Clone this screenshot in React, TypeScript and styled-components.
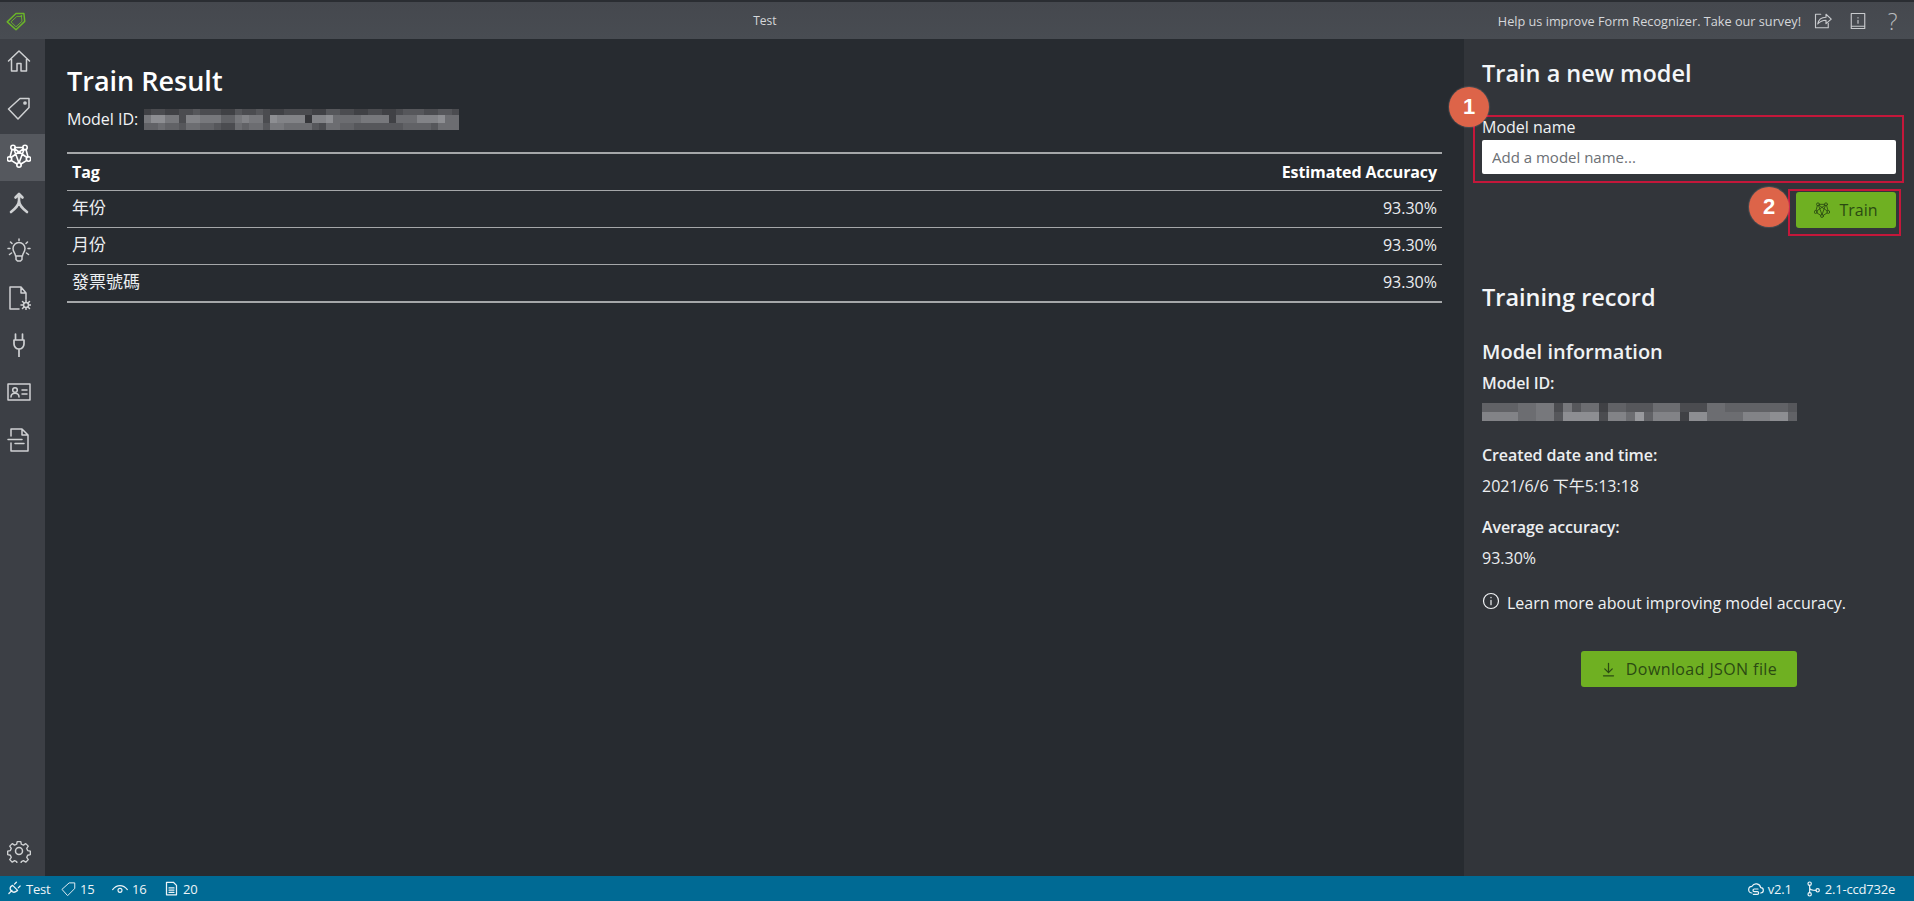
import React from "react";
import styled, { createGlobalStyle } from "styled-components";

const Global = createGlobalStyle`
  html, body { margin: 0; padding: 0; background: #272b30; }
  body { font-family: "Open Sans", "Noto Sans CJK TC", sans-serif; color: #f2f4f6; }
  * { box-sizing: border-box; }
`;

const Shell = styled.div`
  display: grid;
  grid-template-rows: 39px 1fr 25px;
  width: 1914px;
  height: 901px;
  overflow: hidden;
`;

const TitleBar = styled.header`
  display: flex;
  align-items: center;
  background: linear-gradient(#45484e, #484c52);
  border-top: 2px solid #2a2d32;
  font-size: 12.7px;
  color: #d5d7da;
`;
const Logo = styled.div`
  display: flex;
  width: 32px;
  padding-left: 6px;
`;
const BarTitle = styled.div`
  flex: 1;
  text-align: center;
  font-size: 12px;
`;
const BarRight = styled.div`
  display: flex;
  align-items: center;
  padding-right: 4px;
`;
const Survey = styled.span`
  margin-right: 4px;
`;
const BarIcon = styled.span`
  display: flex;
  width: 35px;
  justify-content: center;
  color: #c8cacd;
`;

const Body = styled.div`
  display: grid;
  grid-template-columns: 45px 1fr 450px;
  min-height: 0;
`;

const Side = styled.nav`
  display: flex;
  flex-direction: column;
  background: #3c3f45;
`;
const SideItem = styled.div<{ $active?: boolean }>`
  height: 47.3px;
  display: flex;
  align-items: center;
  justify-content: center;
  padding: 0 7px 3px 0;
  color: ${(p) => (p.$active ? "#ffffff" : "#cfd1d3")};
  background: ${(p) => (p.$active ? "#55585e" : "transparent")};
`;
const SideBottom = styled(SideItem)`
  margin-top: auto;
`;

const Main = styled.main`
  background: #272b30;
  padding: 22px 22px 0;
`;
const PageTitle = styled.h1`
  margin: 0;
  font-size: 27px;
  line-height: 40px;
  font-weight: 600;
  color: #ffffff;
`;
const IdRow = styled.div`
  display: flex;
  align-items: center;
  margin-top: 6px;
  height: 24px;
  font-size: 16px;
  gap: 6px;
`;
const Table = styled.table`
  width: 100%;
  margin-top: 21px;
  border-collapse: separate;
  border-spacing: 0;
  border-top: 2px solid #a5a7a9;
  border-bottom: 2px solid #a5a7a9;
`;
const HeadRow = styled.tr`
  height: 36px;
`;
const Row = styled.tr`
  height: 37px;
  & > * {
    border-top: 1px solid #a5a7a9;
  }
`;
const Cell = styled.td<{ $right?: boolean }>`
  padding: 0 5px 2px;
  font-size: ${(p) => (p.$right ? "16px" : "17px")};
  line-height: 24px;
  text-align: ${(p) => (p.$right ? "right" : "left")};
  color: #eceef0;
`;
const HeadCell = styled.th<{ $right?: boolean }>`
  padding: 0 5px;
  font-size: 16px;
  font-weight: 700;
  letter-spacing: -0.1px;
  text-align: ${(p) => (p.$right ? "right" : "left")};
  color: #ffffff;
`;

const Panel = styled.aside`
  background: #32353a;
  padding: 17px 18px 0;
`;
const PanelTitle = styled.h2<{ $gap?: number }>`
  margin: ${(p) => p.$gap ?? 0}px 0 0;
  font-size: 23.5px;
  line-height: 34px;
  font-weight: 600;
  color: #f4f6f8;
`;
const SubTitle = styled.h3`
  margin: 24px 0 0;
  font-size: 20px;
  line-height: 28px;
  font-weight: 600;
  color: #f0f2f4;
`;
const FieldBlock = styled.div`
  position: relative;
  margin-top: 25px;
`;
const FieldLabel = styled.label`
  display: block;
  font-size: 16px;
  line-height: 24px;
  color: #f0f2f4;
`;
const NameInput = styled.input`
  display: block;
  width: 414px;
  height: 34px;
  margin-top: 1px;
  padding: 0 10px;
  border: 0;
  border-radius: 2px;
  background: #ffffff;
  font: 15px "Open Sans", sans-serif;
  &::placeholder {
    color: #6c7075;
    opacity: 1;
  }
`;
const Frame = styled.div<{ $inset: string }>`
  position: absolute;
  inset: ${(p) => p.$inset};
  border: 2px solid #c4173a;
  pointer-events: none;
`;
const Badge = styled.div<{ $left: number; $top: number }>`
  position: absolute;
  left: ${(p) => p.$left}px;
  top: ${(p) => p.$top}px;
  width: 40px;
  height: 40px;
  border-radius: 50%;
  display: flex;
  align-items: center;
  justify-content: center;
  background: #dd6449;
  box-shadow: 0 0 1px 1px rgba(255, 255, 255, 0.12);
  font: 700 22px "Liberation Sans", sans-serif;
  color: #ffffff;
`;
const TrainRow = styled.div`
  position: relative;
  display: flex;
  justify-content: flex-end;
  margin-top: 18px;
  width: 414px;
`;
const GreenButton = styled.button<{ $w: number }>`
  display: flex;
  align-items: center;
  justify-content: center;
  gap: 9px;
  width: ${(p) => p.$w}px;
  height: 36px;
  padding: 0;
  border: 0;
  border-radius: 3px;
  background: #6fb022;
  color: #2b4a12;
  font: 16px "Open Sans", sans-serif;
`;
const DownloadButton = styled(GreenButton)`
  gap: 10px;
  letter-spacing: 0.4px;
`;
const InfoLabel = styled.div<{ $gap: number }>`
  margin-top: ${(p) => p.$gap}px;
  font-size: 16px;
  line-height: 24px;
  font-weight: 600;
  letter-spacing: -0.1px;
  color: #eceef0;
`;
const InfoValue = styled.div`
  margin-top: 7px;
  font-size: 16px;
  line-height: 24px;
  color: #eceef0;
`;
const MosaicRow = styled.div`
  display: flex;
  margin-top: 8px;
`;
const LearnRow = styled.div`
  display: flex;
  align-items: center;
  gap: 7px;
  margin-top: 21px;
  font-size: 16px;
  line-height: 24px;
  color: #f0f2f4;
`;
const LearnIcon = styled.span`
  display: flex;
  margin-top: -5px;
`;
const Center = styled.div`
  display: flex;
  justify-content: center;
  width: 414px;
  margin-top: 36px;
`;

const StatusBar = styled.footer`
  display: flex;
  align-items: center;
  justify-content: space-between;
  background: #006a94;
  color: #eef4f7;
  font-size: 13px;
  letter-spacing: -0.2px;
  padding: 0 19px 0 7px;
`;
const StatusGroup = styled.div`
  display: flex;
  align-items: center;
`;
const StatusItem = styled.span<{ $w?: number }>`
  display: flex;
  align-items: center;
  gap: 4px;
  width: ${(p) => (p.$w ? `${p.$w}px` : "auto")};
`;
const MosaicSvg = styled.svg`
  filter: blur(0.4px);
`;

type P = { size?: number };
const S: React.FC<React.PropsWithChildren<P & { w?: number; sw?: number; vb?: string }>> = ({ size = 24, w, sw = 1.5, vb = "0 0 24 24", children }) => (
  <svg width={w ?? size} height={size} viewBox={vb} fill="none" stroke="currentColor" strokeWidth={sw} strokeLinecap="round" strokeLinejoin="round">
    {children}
  </svg>
);

const HomeIcon = () => (
  <S>
    <path d="M1.5 12 12 2l10.5 10M4.5 10v12h5.5v-7.5h4V22h5.500V10" />
  </S>
);
const TagIcon = () => (
  <S>
    <path d="M1.500 13 13 2.500h9v9L11 23z" />
    <circle cx="18" cy="7" r="1.100" fill="currentColor" />
  </S>
);
const NetIcon: React.FC<P & { sw?: number }> = ({ size = 24, sw = 1.6 }) => (
  <S size={size} sw={sw}>
    <circle cx="6" cy="3.500" r="2.200" />
    <circle cx="18" cy="3.500" r="2.200" />
    <circle cx="21.500" cy="15" r="2.200" />
    <circle cx="12" cy="21" r="2.200" />
    <circle cx="2.500" cy="15" r="2.200" />
    <path d="M8 3.500h8M19 5.500l2 7.500M19.800 16.300 14 20M10 20l-5.800-3.700M3 13l2-7.500M7.700 5 20 13.500M16.300 5 4 13.500M7 5.500l5 13.500M17 5.500l-5 13.500" />
  </S>
);
const MergeIcon = () => (
  <S sw={2.600}>
    <path d="M12 3.500v6c0 5-3.500 8-8 11.500M12 9.500c0 5 3.500 8 8 11.500M8.500 6.500 12 3l3.500 3.500" />
  </S>
);
const BulbIcon = () => (
  <S>
    <path d="M8.500 18c0-3-2.500-4-2.500-7.500a6 6 0 0 1 12 0c0 3.500-2.500 4.500-2.500 7.500zM9 18v3.500l1.500 1.500h3l1.500-1.500V18M12 1v1.500M3.500 4 5 5.500M20.500 4 19 5.500M1 10.500h2M21 10.500h2M2.500 16.500 4.500 15M21.500 16.500 19.500 15" />
  </S>
);
const DocGearIcon = () => (
  <S>
    <path d="M12 23H3V1h11l5 6v6M14 1v6h5" />
    <circle cx="19" cy="19" r="2.500" />
    <path d="M19 14v2M19 22v2M14 19h2M22 19h2M15.500 15.500l1.500 1.500M21 21l1.500 1.500M22.500 15.500 21 17M17 21l-1.500 1.500" />
  </S>
);
const PlugIcon = () => (
  <S sw={1.700}>
    <path d="M8.500 1v6M15.500 1v6M7 7h10v4a5 5 0 0 1-10 0zM12 16v8" />
  </S>
);
const CardIcon = () => (
  <S>
    <rect x="1" y="4" width="22" height="16" />
    <circle cx="8" cy="10" r="2.300" />
    <path d="M4 17c0-5 8-5 8 0M15 10h5M15 14h5" />
  </S>
);
const FormIcon = () => (
  <S>
    <path d="M4 8V1h11l6 6v16H4v-8M15 1v6h6M1 11.500h14M8 15.500h9" />
  </S>
);
const GearIcon = () => (
  <S>
    <circle cx="12" cy="12" r="3.500" />
    <path d="M10 1.500h4l.6 3 2.300 1 2.600-1.700 2.800 2.800-1.700 2.600 1 2.300 3 .6v4l-3 .6-1 2.300 1.700 2.600-2.800 2.800-2.600-1.700-2.300 1-.6 3h-4l-.6-3-2.300-1-2.600 1.700-2.800-2.800 1.700-2.600-1-2.300-3-.6v-4l3-.6 1-2.300L1.700 6.600l2.800-2.800 2.600 1.700 2.300-1z" transform="translate(1.200 1.200) scale(.9)" />
  </S>
);
const LogoIcon = () => (
  <svg width="20" height="20" viewBox="0 0 24 24" fill="none" stroke="#6bb42a" strokeWidth="1.800" strokeLinejoin="round">
    <path d="M1.500 13 12 3h9.500l1 9.500L12 22.500z" />
    <path d="M6 13 13 6.500h5.500l.7 5.800L12 19z" strokeWidth="1.100" />
    <circle cx="18.500" cy="6" r="1.100" fill="#6bb42a" stroke="none" />
  </svg>
);
const ShareIcon = () => (
  <S size={18}>
    <path d="M9 3H2v18h17v-6M5 16c1-6 5-9 11-9V3l7 6.500-7 6V11c-5 0-8 1.500-11 5z" />
  </S>
);
const BookIcon = () => (
  <S size={18}>
    <path d="M3 19V2h18v17zM3 19v3h18v-3M12 7.500v.5M12 11v4" />
  </S>
);
const HelpGlyph = styled.span`
  width: 35px;
  text-align: center;
  font: 300 23px "Open Sans", sans-serif;
  line-height: 20px;
  color: #b9bbbe;
`;
const InfoCircle = () => (
  <S size={18} sw={1.600}>
    <circle cx="12" cy="12" r="10" />
    <path d="M12 7v.500M12 11v6" />
  </S>
);
const DownloadIcon = () => (
  <S size={15} sw={2}>
    <path d="M12 2v15M6 11l6 6 6-6M4 22h16" />
  </S>
);
const PlugStatus = () => (
  <S size={15} sw={2}>
    <path d="M3 21l5-5M15 3l-3 3M21 9l-3 3M9 8l8 8-3 2c-3 2-6 0-7-1s-3-4-1-7z" transform="translate(0 -1)" />
  </S>
);
const TagStatus = () => (
  <S size={15}>
    <path d="M2 13 13 3h9v9L11 23z" />
  </S>
);
const EyeStatus = () => (
  <S size={16} sw={1.700}>
    <path d="M1 13c6-8 16-8 22 0" />
    <circle cx="12" cy="14" r="3" />
  </S>
);
const DocStatus = () => (
  <S size={15} sw={2}>
    <path d="M4 2h11l5 5v15H4zM8 11h8M8 14.500h8M8 18h8" />
  </S>
);
const CloudStatus = () => (
  <S size={16} sw={1.800}>
    <path d="M6 18a5 5 0 0 1 0-10 7 7 0 0 1 13 2 4 4 0 0 1 0 8M15 12H9.500a2 2 0 0 0 0 4H14a2 2 0 0 1 0 4H8" />
  </S>
);
const BranchStatus = () => (
  <S size={16} sw={1.800}>
    <circle cx="7" cy="4" r="2.500" />
    <circle cx="7" cy="20" r="2.500" />
    <circle cx="19" cy="14" r="2.500" />
    <path d="M7 6.500v11M7 10c0 3 4 4 9.500 4" />
  </S>
);

const Mosaic: React.FC<{ rows: string[]; cell: number; heights: number[] }> = ({ rows, cell, heights }) => {
  let y = 0;
  const total = heights.reduce((a, b) => a + b, 0);
  return (
    <MosaicSvg width={rows[0].length * cell} height={total} shapeRendering="crispEdges">
      {rows.map((r, ri) => {
        const top = y;
        y += heights[ri];
        return r.split("").map((c, i) => {
          const v = 42 + parseInt(c, 16) * 11;
          return <rect key={`${ri}-${i}`} x={i * cell} y={top} width={cell} height={heights[ri]} fill={`rgb(${v},${v + 1},${v + 5})`} />;
        });
      })}
    </MosaicSvg>
  );
};

const rowsA = [
  "233223343332243343223333224433223322344433443",
  "79977388777557877398888188966667777266688896" + "6",
  "556554665543365664776666436655444444455554666",
];
const rowsB = [
  "55556677374662554446663336655555554",
  "88886677499993886a58882996666888995",
];

const rows: [string, string][] = [
  ["年份", "93.30%"],
  ["月份", "93.30%"],
  ["發票號碼", "93.30%"],
];

export default function App() {
  return (
    <Shell>
      <Global />
      <TitleBar>
        <Logo>
          <LogoIcon />
        </Logo>
        <BarTitle>Test</BarTitle>
        <BarRight>
          <Survey>Help us improve Form Recognizer. Take our survey!</Survey>
          <BarIcon>
            <ShareIcon />
          </BarIcon>
          <BarIcon>
            <BookIcon />
          </BarIcon>
          <HelpGlyph>?</HelpGlyph>
        </BarRight>
      </TitleBar>
      <Body>
        <Side>
          <SideItem><HomeIcon /></SideItem>
          <SideItem><TagIcon /></SideItem>
          <SideItem $active><NetIcon /></SideItem>
          <SideItem><MergeIcon /></SideItem>
          <SideItem><BulbIcon /></SideItem>
          <SideItem><DocGearIcon /></SideItem>
          <SideItem><PlugIcon /></SideItem>
          <SideItem><CardIcon /></SideItem>
          <SideItem><FormIcon /></SideItem>
          <SideBottom><GearIcon /></SideBottom>
        </Side>
        <Main>
          <PageTitle>Train Result</PageTitle>
          <IdRow>
            Model ID:
            <Mosaic rows={rowsA} cell={7} heights={[6, 8, 7]} />
          </IdRow>
          <Table>
            <thead>
              <HeadRow>
                <HeadCell>Tag</HeadCell>
                <HeadCell $right>Estimated Accuracy</HeadCell>
              </HeadRow>
            </thead>
            <tbody>
              {rows.map(([t, a]) => (
                <Row key={t}>
                  <Cell>{t}</Cell>
                  <Cell $right>{a}</Cell>
                </Row>
              ))}
            </tbody>
          </Table>
        </Main>
        <Panel>
          <PanelTitle>Train a new model</PanelTitle>
          <FieldBlock>
            <FieldLabel>Model name</FieldLabel>
            <NameInput placeholder="Add a model name..." />
            <Frame $inset="0 -8px -9px -9px" />
            <Badge $left={-33} $top={-28}>1</Badge>
          </FieldBlock>
          <TrainRow>
            <GreenButton $w={100}>
              <NetIcon size={16} sw={1.300} />
              Train
            </GreenButton>
            <Frame $inset="-3px -5px -8px 306px" />
            <Badge $left={267} $top={-5}>2</Badge>
          </TrainRow>
          <PanelTitle $gap={52}>Training record</PanelTitle>
          <SubTitle>Model information</SubTitle>
          <InfoLabel $gap={5}>Model ID:</InfoLabel>
          <MosaicRow>
            <Mosaic rows={rowsB} cell={9} heights={[9, 9]} />
          </MosaicRow>
          <InfoLabel $gap={22}>Created date and time:</InfoLabel>
          <InfoValue>2021/6/6 下午5:13:18</InfoValue>
          <InfoLabel $gap={17}>Average accuracy:</InfoLabel>
          <InfoValue>93.30%</InfoValue>
          <LearnRow>
            <LearnIcon><InfoCircle /></LearnIcon>
            Learn more about improving model accuracy.
          </LearnRow>
          <Center>
            <DownloadButton $w={216}>
              <DownloadIcon />
              Download JSON file
            </DownloadButton>
          </Center>
        </Panel>
      </Body>
      <StatusBar>
        <StatusGroup>
          <StatusItem $w={54}><PlugStatus />Test</StatusItem>
          <StatusItem $w={51}><TagStatus />15</StatusItem>
          <StatusItem $w={52}><EyeStatus />16</StatusItem>
          <StatusItem><DocStatus />20</StatusItem>
        </StatusGroup>
        <StatusGroup>
          <StatusItem $w={57}><CloudStatus />v2.1</StatusItem>
          <StatusItem><BranchStatus />2.1-ccd732e</StatusItem>
        </StatusGroup>
      </StatusBar>
    </Shell>
  );
}
